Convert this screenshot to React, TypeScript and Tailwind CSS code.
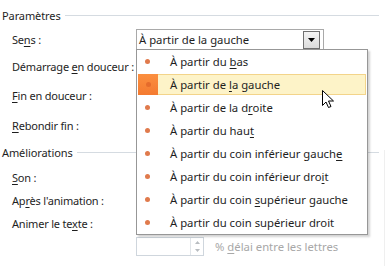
import React from 'react'

const font = { fontFamily: '"Segoe UI", "Noto Sans", "Open Sans", sans-serif' }

const items = [
  ['À partir du ', 'b', 'as'],
  ['À partir de ', 'l', 'a gauche'],
  ['À partir de la d', 'r', 'oite'],
  ['À partir du hau', 't', ''],
  ['À partir du coin inférieur gauch', 'e', ''],
  ['À partir du coin inférieur dro', 'i', 't'],
  ['À partir du coin ', 's', 'upérieur gauche'],
  ['À partir du coin supérieur droit', '', ''],
]

const Key = ({ children }: { children: React.ReactNode }) => (
  <u className="underline decoration-1 underline-offset-2">{children}</u>
)

const Row = ({ className, children }: { className: string; children: React.ReactNode }) => (
  <div className={`flex items-center pl-[12px] text-[11px] tracking-[-0.2px] ${className}`}>{children}</div>
)

const Group = ({ title, className }: { title: string; className: string }) => (
  <div className={`flex items-center pl-[2px] pr-[9px] text-[11px] tracking-[-0.1px] ${className}`}>
    <span>{title}</span>
    <div className="ml-[4px] h-px flex-1 bg-[#d5dbe1]" />
  </div>
)

export default function App() {
  return (
    <div
      className="relative h-[266px] w-[388px] overflow-hidden bg-white text-[11.3px] leading-none text-[#1e1e1e] antialiased"
      style={font}
    >
      <div className="absolute right-[3px] top-[150px] h-[116px] w-px bg-[#efefef]" />
      <div className="flex flex-col pt-[8px]">
        <Group title="Paramètres" className="h-[14px]" />
        <Row className="mt-[7px] h-[21px]">
          <span className="w-[124px]">Se<Key>n</Key>s :</span>
          <div className="flex h-[21px] w-[188px] items-center justify-between border border-[#a9a9a9] bg-white pl-[2px] pr-[3px] text-[11.3px] tracking-normal">
            <span>À partir de la gauche</span>
            <div className="flex h-[18px] w-[17px] items-center justify-center border border-[#707070] bg-gradient-to-b from-[#f4f4f4] to-[#dcdcdc]">
              <svg width="7" height="4" viewBox="0 0 7 4">
                <path d="M0 0h7L3.5 4z" fill="#000" />
              </svg>
            </div>
          </div>
        </Row>
        <Row className="mt-[6px] h-[20px]">
          <span>Démarrage <Key>e</Key>n douceur :</span>
        </Row>
        <Row className="mt-[9px] h-[20px]">
          <span><Key>F</Key>in en douceur :</span>
        </Row>
        <Row className="mt-[10px] h-[20px]">
          <span><Key>R</Key>ebondir fin :</span>
        </Row>
        <Group title="Améliorations" className="mt-[10px] h-[14px]" />
        <Row className="mt-[8px] h-[20px]">
          <span><Key>S</Key>on :</span>
        </Row>
        <Row className="mt-[3px] h-[20px]">
          <span>Ap<Key>r</Key>ès l'animation :</span>
        </Row>
        <Row className="mt-[3px] h-[20px]">
          <span>Animer le te<Key>x</Key>te :</span>
        </Row>
        <div className="mt-[4px] flex h-[19px] items-center pl-[136px]">
          <div className="flex h-[19px] w-[68px] border border-[#cfd6dd] bg-white">
            <div className="flex-1" />
            <div className="flex w-[13px] flex-col border-l border-[#e1e5e9]">
              <div className="flex flex-1 items-center justify-center">
                <svg width="5" height="3" viewBox="0 0 5 3"><path d="M0 3h5L2.5 0z" fill="#b8bcc0" /></svg>
              </div>
              <div className="flex flex-1 items-center justify-center">
                <svg width="5" height="3" viewBox="0 0 5 3"><path d="M0 0h5L2.5 3z" fill="#b8bcc0" /></svg>
              </div>
            </div>
          </div>
          <span className="ml-[11px] text-[#a8a8a8]">% <Key>d</Key>élai entre les lettres</span>
        </div>
      </div>

      <div className="absolute left-[136px] top-[49px] flex w-[232px] flex-col border border-[#979797] bg-white shadow-[2px_2px_2px_rgba(0,0,0,0.18)]">
        {items.map(([a, k, b], i) => (
          <div key={i} className="flex h-[23px] items-center px-px">
            {i === 1 ? (
              <div className="flex h-[21px] flex-1 items-center border border-[#f3d48a] bg-[#fdf3c8]">
                <div className="flex h-[21px] w-[20px] -my-px -ml-px items-center justify-center bg-gradient-to-b from-[#fb8f3f] to-[#f47a30]">
                  <div className="h-[5px] w-[5px] rounded-full bg-[#e56b2c]" />
                </div>
                <span className="ml-[12px]">{a}<Key>{k}</Key>{b}</span>
              </div>
            ) : (
              <div className="flex flex-1 items-center">
                <div className="flex w-[19px] justify-center">
                  <div className="h-[5px] w-[5px] rounded-full bg-[#e07a4c]" />
                </div>
                <span className="ml-[13px]">{a}{k && <Key>{k}</Key>}{b}</span>
              </div>
            )}
          </div>
        ))}
      </div>

      <svg className="absolute left-[321px] top-[89px]" width="14" height="21" viewBox="0 0 14 21">
        <path d="M1.5 1.5v15l3.5-3.5 2.5 5.5 2.5-1-2.5-5.5h5z" fill="#fff" stroke="#000" strokeWidth="1" strokeLinejoin="round" />
      </svg>
    </div>
  )
}
